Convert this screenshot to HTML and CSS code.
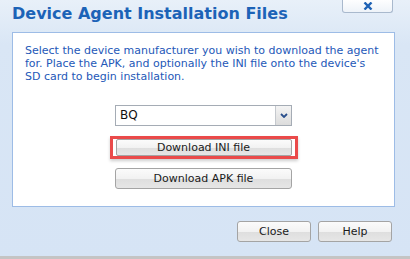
FILE: index.html
```html
<!DOCTYPE html>
<html lang="en">
<head>
    <meta charset="UTF-8">
    <title>Device Agent Installation Files</title>
    <link rel="stylesheet" href="styles.css">
</head>
<body>
    <div class="dialog">
        <div class="dialog-header">
            <h1>Device Agent Installation Files</h1>
            <button class="close-x" title="Close">
                <svg viewBox="0 0 10 8" width="10" height="8">
                    <path d="M1.5 0.5L8.5 7.5M8.5 0.5L1.5 7.5"></path>
                </svg>
            </button>
        </div>

        <div class="panel">
            <p>Select the device manufacturer you wish to download the agent for. Place the APK, and optionally the INI file onto the device's SD card to begin installation.</p>

            <div class="select-box">
                <span class="select-value">BQ</span>
                <span class="select-arrow">
                    <svg viewBox="0 0 8 5" width="8" height="5">
                        <path d="M1 1l3 3l3-3"></path>
                    </svg>
                </span>
            </div>

            <div class="callout">
                <button class="btn wide">Download INI file</button>
            </div>
            <button class="btn wide">Download APK file</button>
        </div>

        <div class="dialog-footer">
            <button class="btn small">Close</button>
            <button class="btn small">Help</button>
        </div>
    </div>
    <div class="bottom-edge"></div>
</body>
</html>
```

FILE: styles.css
```css
* {
    margin: 0;
    padding: 0;
    box-sizing: border-box;
}

body {
    font-family: "DejaVu Sans", Verdana, sans-serif;
    background: linear-gradient(180deg, #e8f0f9 0px, #d9e6f5 45px, #d6e4f5 100%);
    width: 410px;
    height: 259px;
    overflow: hidden;
}

.dialog {
    height: 256px;
    display: flex;
    flex-direction: column;
}

.dialog-header {
    height: 32px;
    display: flex;
    justify-content: space-between;
    align-items: flex-start;
    padding: 0 17px 0 12px;
}

h1 {
    font-size: 16px;
    font-weight: bold;
    color: #1c63b7;
    line-height: 20px;
    padding-top: 4px;
}

.close-x {
    width: 51px;
    height: 14px;
    border: 1px solid #a9b9cd;
    border-top: none;
    border-radius: 0 0 3px 3px;
    background: linear-gradient(180deg, #ffffff 0%, #eef3f9 100%);
    display: flex;
    align-items: center;
    justify-content: center;
    margin-top: -1px;
}

.close-x svg path {
    stroke: #1f62b5;
    stroke-width: 2.4;
    fill: none;
}

.panel {
    margin: 0 15px 0 12px;
    height: 175px;
    background: #fff;
    border: 1px solid #9dbce6;
    padding: 11px 12px 0 12px;
    display: flex;
    flex-direction: column;
    align-items: center;
}

.panel p {
    font-size: 11px;
    line-height: 13px;
    color: #2458b8;
    align-self: stretch;
    margin-bottom: 22px;
}

.select-box {
    width: 177px;
    height: 21px;
    border: 1px solid #a5acb5;
    display: flex;
    margin-bottom: 10px;
}

.select-value {
    flex: 1;
    font-size: 12px;
    color: #111;
    padding: 2px 0 0 4px;
}

.select-arrow {
    width: 16px;
    border-left: 1px solid #c5c9ce;
    background: linear-gradient(180deg, #f4f4f4 0%, #dcdcdc 100%);
    display: flex;
    align-items: center;
    justify-content: center;
}

.select-arrow svg path {
    stroke: #2a4f8c;
    stroke-width: 1.8;
    fill: none;
}

.callout {
    border: 3px solid #ea4a4a;
    padding: 0 3px;
    height: 23px;
    display: flex;
    align-items: center;
    margin-bottom: 9px;
    box-shadow: 0 2px 3px rgba(0, 0, 0, 0.2);
}

.btn {
    font-family: "DejaVu Sans", Verdana, sans-serif;
    font-size: 11px;
    color: #1a1a1a;
    border: 1px solid #a4a4a4;
    border-radius: 3px;
    background: linear-gradient(180deg, #fbfbfb 0%, #f2f2f2 50%, #dedede 51%, #e6e6e6 100%);
    height: 21px;
}

.btn.wide {
    width: 177px;
}

.callout .btn {
    height: 17px;
    width: 176px;
    border-radius: 2px;
}

.dialog-footer {
    display: flex;
    justify-content: flex-end;
    gap: 7px;
    padding: 14px 18px 0 0;
}

.btn.small {
    width: 74px;
}

.bottom-edge {
    height: 3px;
    background: #c4c4c4;
}
```
